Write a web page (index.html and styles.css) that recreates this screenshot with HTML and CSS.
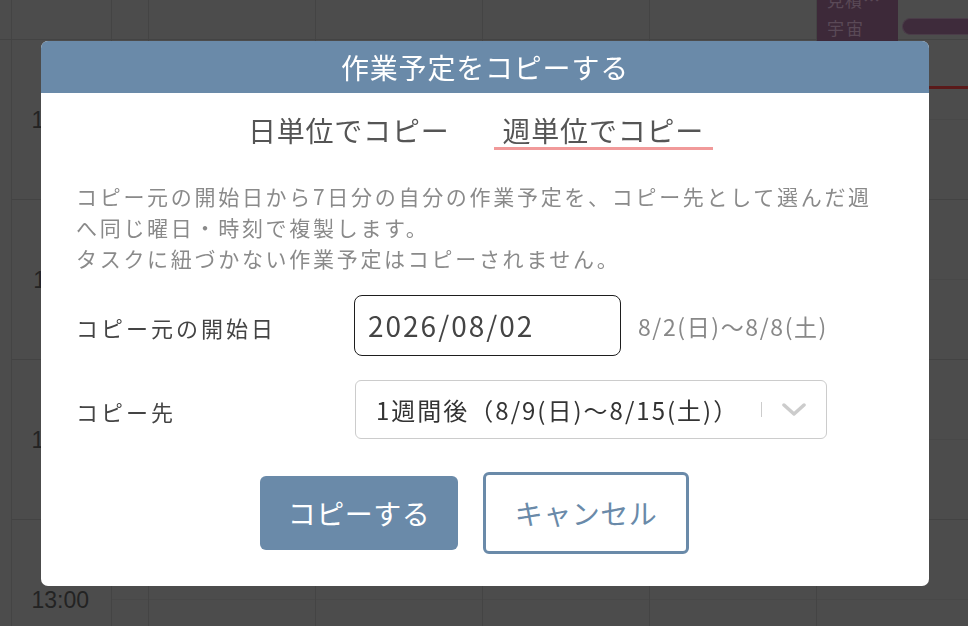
FILE: index.html
```html
<!DOCTYPE html>
<html lang="ja">
<head>
<meta charset="utf-8">
<title>作業予定をコピーする</title>
<link rel="stylesheet" href="styles.css">
</head>
<body>
<div class="cal">
  <div class="cal-head">
    <div class="c gut"></div>
    <div class="c time"></div>
    <div class="c narrow"></div>
    <div class="c day"></div>
    <div class="c day"></div>
    <div class="c day"></div>
    <div class="c day"></div>
    <div class="c day ev-cell">
      <div class="ev-card"><span class="ev-t1">見積…</span><span class="ev-t2">宇宙</span></div>
      <div class="ev-pill"></div>
    </div>
  </div>
  <div class="cal-body">
    <div class="col gut"></div>
    <div class="col time">
      <div class="hr"><span>10:00</span></div>
      <div class="hr"><span>11:00</span></div>
      <div class="hr"><span>12:00</span></div>
      <div class="hr"><span>13:00</span></div>
    </div>
    <div class="col narrow"><div class="s"></div><div class="s"></div><div class="s"></div><div class="s"></div><div class="s"></div><div class="s"></div><div class="s"></div><div class="s"></div></div>
    <div class="col day"><div class="s"></div><div class="s"></div><div class="s"></div><div class="s"></div><div class="s"></div><div class="s"></div><div class="s"></div><div class="s"></div></div>
    <div class="col day"><div class="s"></div><div class="s"></div><div class="s"></div><div class="s"></div><div class="s"></div><div class="s"></div><div class="s"></div><div class="s"></div></div>
    <div class="col day"><div class="s"></div><div class="s"></div><div class="s"></div><div class="s"></div><div class="s"></div><div class="s"></div><div class="s"></div><div class="s"></div></div>
    <div class="col day"><div class="s"></div><div class="s"></div><div class="s"></div><div class="s"></div><div class="s"></div><div class="s"></div><div class="s"></div><div class="s"></div></div>
    <div class="col day"><div class="s"></div><div class="s"></div><div class="s"></div><div class="s"></div><div class="s"></div><div class="s"></div><div class="s"></div><div class="s"></div></div>
    <div class="now-line"></div>
  </div>
</div>

<div class="overlay">
  <div class="modal">
    <div class="modal-head">作業予定をコピーする</div>
    <div class="modal-body">
      <div class="tabs">
        <div class="tab">日単位でコピー</div>
        <div class="tab active">週単位でコピー</div>
      </div>
      <p class="desc">
        <span class="ln">コピー元の開始日から7日分の自分の作業予定を、コピー先として選んだ週</span>
        <span class="ln">へ同じ曜日・時刻で複製します。</span>
        <span class="ln">タスクに紐づかない作業予定はコピーされません。</span>
      </p>
      <div class="form-row">
        <div class="label">コピー元の開始日</div>
        <div class="date-input">2026/08/02</div>
        <div class="range">8/2(日)〜8/8(土)</div>
      </div>
      <div class="form-row second">
        <div class="label">コピー先</div>
        <div class="select">
          <span class="sel-text">1週間後（8/9(日)〜8/15(土)）</span>
          <span class="sel-sep"></span>
          <svg class="chev" width="24" height="14" viewBox="0 0 24 14"><path d="M2 2 L12 11 L22 2" fill="none" stroke="#cccccc" stroke-width="3.5" stroke-linecap="round" stroke-linejoin="round"/></svg>
        </div>
      </div>
      <div class="actions">
        <div class="btn primary">コピーする</div>
        <div class="btn outline">キャンセル</div>
      </div>
    </div>
  </div>
</div>
</body>
</html>
```

FILE: styles.css
```css
* { box-sizing: border-box; }
html, body { margin: 0; padding: 0; }
body {
  width: 968px;
  height: 626px;
  overflow: hidden;
  background: #4c4c4c;
  font-family: "Noto Sans CJK JP", "Noto Sans", sans-serif;
}

/* background calendar */
.cal { width: 968px; height: 626px; overflow: hidden; }
.cal-head { display: flex; height: 40px; border-bottom: 1px solid #434343; }
.cal-head .c { flex: none; height: 100%; border-right: 1px solid #444444; }
.gut { width: 12px; flex: none; border-right: 1px solid #444444; }
.time { width: 100px; flex: none; border-right: 1px solid #444444; }
.narrow { width: 37px; flex: none; border-right: 1px solid #444444; }
.day { width: 167px; flex: none; border-right: 1px solid #444444; }

.ev-cell { position: relative; }
.ev-card {
  position: absolute;
  left: 0;
  top: -14px;
  width: 81px;
  height: 80px;
  background: #3d2939;
  color: #5a4957;
  font-size: 17px;
  line-height: 28px;
  padding: 0 0 0 10px;
  display: flex;
  flex-direction: column;
  overflow: hidden;
}
.ev-t1 { letter-spacing: 1px; }
.ev-t2 { letter-spacing: 2px; }
.ev-pill {
  position: absolute;
  left: 85px;
  top: 18px;
  width: 66px;
  height: 17px;
  border-radius: 9px 0 0 9px;
  background: #3e2b3b;
  border: 1px solid #4a3c48;
  border-right: none;
}

.cal-body { display: flex; position: relative; }
.col { flex: none; }
.col.time .hr {
  height: 160px;
  border-bottom: 1px solid #434343;
  display: flex;
  align-items: center;
  justify-content: flex-end;
  padding-right: 22px;
  padding-top: 2px;
}
.col.time .hr span {
  font-family: "Liberation Sans", Arial, sans-serif;
  font-size: 23px;
  color: #232323;
}
.col .s { height: 80px; border-bottom: 1px solid #484848; }
.col .s:nth-child(2n) { border-bottom-color: #434343; }
.now-line {
  position: absolute;
  left: 148px;
  right: 0;
  top: 46px;
  height: 3px;
  background: #5a1a1a;
}

/* modal */
.overlay {
  position: fixed;
  inset: 0;
  display: flex;
  align-items: center;
  justify-content: center;
  padding-left: 2px;
}
.modal {
  width: 888px;
  height: 545px;
  background: #ffffff;
  border-radius: 7px;
  overflow: hidden;
}
.modal-head {
  height: 52px;
  background: #6a8aa9;
  color: #ffffff;
  font-size: 28px;
  line-height: 52px;
  letter-spacing: 0.8px;
  text-align: center;
}
.modal-body { padding: 23px 35px 0 35px; }

.tabs {
  display: flex;
  justify-content: center;
  gap: 35px;
  padding-right: 18px;
}
.tab {
  font-size: 28px;
  line-height: 28px;
  letter-spacing: 0.8px;
  color: #555555;
  padding: 0 9px 3px 9px;
  border-bottom: 3px solid transparent;
}
.tab.active { border-bottom-color: #f19a9a; }

.desc {
  margin: 31px 0 0 0;
  font-size: 21px;
  line-height: 31px;
  letter-spacing: 2.7px;
  color: #8a8a8a;
}
.desc .ln { display: block; white-space: nowrap; }

.form-row {
  display: flex;
  align-items: center;
  margin-top: 21px;
}
.form-row.second { margin-top: 24px; }
.label {
  width: 278px;
  flex: none;
  font-size: 22px;
  letter-spacing: 3px;
  color: #444444;
  padding-top: 3px;
}
.date-input {
  width: 267px;
  height: 61px;
  border: 1px solid #1e1e1e;
  border-radius: 8px;
  padding-left: 13px;
  display: flex;
  align-items: center;
  font-size: 28px;
  letter-spacing: 2px;
  color: #444444;
}
.range {
  margin-left: 17px;
  font-size: 23px;
  letter-spacing: 1.6px;
  color: #888888;
  padding-top: 2px;
}
.select {
  width: 472px;
  height: 59px;
  margin-left: 1px;
  border: 1px solid #cccccc;
  border-radius: 6px;
  display: flex;
  align-items: center;
  padding-left: 20px;
}
.sel-text {
  font-size: 24px;
  letter-spacing: 2px;
  color: #333333;
  flex: 1;
  white-space: nowrap;
}
.sel-sep {
  width: 1px;
  height: 15px;
  background: #cccccc;
  margin-right: 20px;
}
.chev { margin-right: 20px; margin-top: 2px; }

.actions {
  display: flex;
  justify-content: center;
  align-items: center;
  gap: 25px;
  margin-top: 33px;
  padding-right: 21px;
}
.btn {
  display: flex;
  align-items: center;
  justify-content: center;
  font-size: 28px;
  letter-spacing: 0.5px;
  border-radius: 6px;
}
.btn.primary {
  width: 198px;
  height: 74px;
  background: #6a8aa9;
  color: #ffffff;
}
.btn.outline {
  width: 206px;
  height: 82px;
  background: #ffffff;
  border: 3px solid #6a8aa9;
  color: #6a8aa9;
}
```
